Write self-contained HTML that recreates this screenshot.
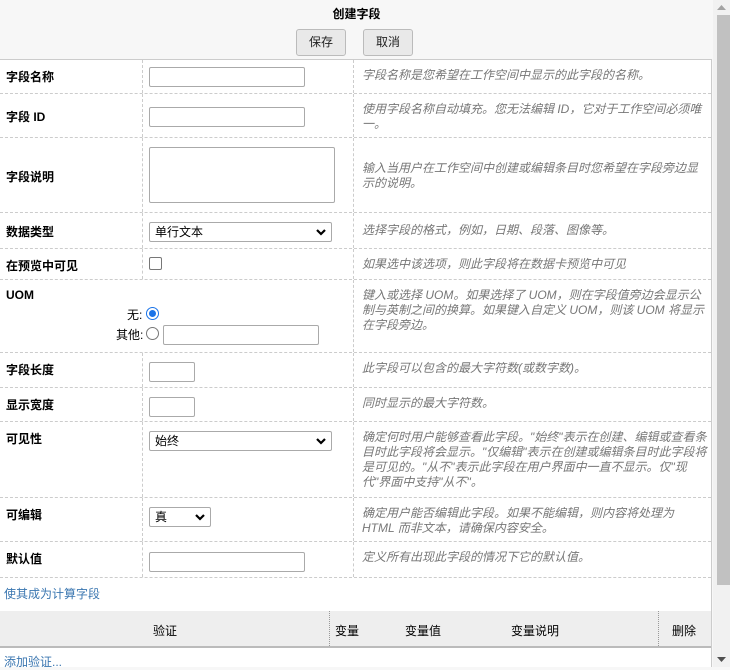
<!DOCTYPE html>
<html><head><meta charset="utf-8"><style>
*{box-sizing:border-box;margin:0;padding:0}
body{width:730px;height:667px;overflow:hidden;background:#f7f7f7;font-family:"Liberation Sans","Noto Sans CJK SC",sans-serif;font-size:12px;color:#000;position:relative}
.title{position:absolute;top:5px;left:0;width:713px;text-align:center;font-weight:bold;font-size:12px}
.btn{position:absolute;top:29px;height:27px;border:1px solid #bbb;border-radius:3px;background:#e9e9e9;font-size:12px;text-align:center;line-height:25px;color:#222}
.box{position:absolute;left:0;top:59px;width:712px;height:608px;background:#fff;border-top:1px solid #ccc;border-right:1px solid #ccc}
.row{position:absolute;left:0;width:711px;border-bottom:1px dashed #ccc}
.lab{position:absolute;left:6px;top:8px;font-weight:bold}
.c1{position:absolute;left:142px;top:0;bottom:0;border-left:1px dashed #ccc}
.c2{position:absolute;left:353px;top:0;bottom:0;border-left:1px dashed #ccc}
.help{position:absolute;left:362px;top:8px;width:345px;color:#777;font-style:italic;line-height:15px;font-size:12px}
.inp{position:absolute;left:149px;height:20px;border:1px solid #aaa;border-radius:2px;background:#fff}
.sel{position:absolute;left:149px;height:20px;border:1px solid #aaa;border-radius:2px;background:#fff;padding-left:5px;line-height:18px}
.sel svg{position:absolute;right:5px;top:6px}
.sb{position:absolute;left:713px;top:0;width:17px;height:667px;background:#f1f1f1}
.th{position:absolute;left:4px;top:15px;width:13px;height:570px;background:#c1c1c1}
a{color:#3a76b0;text-decoration:none}
</style></head><body>
<div class="title">创建字段</div>
<div class="btn" style="left:296px;width:50px">保存</div>
<div class="btn" style="left:363px;width:50px">取消</div>
<div class="box">
<div class="row" style="top:0;height:34px"><div class="lab">字段名称</div><div class="c1"></div><div class="c2"></div><div class="inp" style="top:7px;width:156px"></div><div class="help">字段名称是您希望在工作空间中显示的此字段的名称。</div></div>
<div class="row" style="top:34px;height:44px"><div class="lab" style="top:14px">字段 ID</div><div class="c1"></div><div class="c2"></div><div class="inp" style="top:13px;width:156px"></div><div class="help">使用字段名称自动填充。您无法编辑 ID，它对于工作空间必须唯一。</div></div>
<div class="row" style="top:78px;height:75px"><div class="lab" style="top:30px">字段说明</div><div class="c1"></div><div class="c2"></div><div class="inp" style="top:9px;width:186px;height:56px"></div><div class="help" style="top:23px">输入当用户在工作空间中创建或编辑条目时您希望在字段旁边显示的说明。</div></div>
<div class="row" style="top:153px;height:36px"><div class="lab" style="top:10px">数据类型</div><div class="c1"></div><div class="c2"></div><div class="sel" style="top:9px;width:183px">单行文本<svg width="10" height="7"><path d="M1 1L5 5L9 1" stroke="#000" stroke-width="2.2" fill="none"/></svg></div><div class="help" style="top:10px">选择字段的格式，例如，日期、段落、图像等。</div></div>
<div class="row" style="top:189px;height:31px"><div class="lab">在预览中可见</div><div class="c1"></div><div class="c2"></div><div style="position:absolute;left:149px;top:8px;width:13px;height:13px;border:1px solid #777;border-radius:2px"></div><div class="help">如果选中该选项，则此字段将在数据卡预览中可见</div></div>
<div class="row" style="top:220px;height:73px"><div class="lab" style="top:8px">UOM</div><div class="c2"></div>
<div style="position:absolute;left:127px;top:26px">无:</div><div style="position:absolute;left:146px;top:27px;width:13px;height:13px;border:1px solid #1a73e8;border-radius:50%;background:#fff"><div style="position:absolute;left:2px;top:2px;width:7px;height:7px;border-radius:50%;background:#1a73e8"></div></div>
<div style="position:absolute;left:116px;top:46px">其他:</div><div style="position:absolute;left:146px;top:47px;width:13px;height:13px;border:1px solid #777;border-radius:50%"></div><div class="inp" style="left:163px;top:45px;width:156px"></div>
<div class="help">键入或选择 UOM。如果选择了 UOM，则在字段值旁边会显示公制与英制之间的换算。如果键入自定义 UOM，则该 UOM 将显示在字段旁边。</div></div>
<div class="row" style="top:293px;height:35px"><div class="lab">字段长度</div><div class="c1"></div><div class="c2"></div><div class="inp" style="top:9px;width:46px"></div><div class="help">此字段可以包含的最大字符数(或数字数)。</div></div>
<div class="row" style="top:328px;height:34px"><div class="lab">显示宽度</div><div class="c1"></div><div class="c2"></div><div class="inp" style="top:9px;width:46px"></div><div class="help">同时显示的最大字符数。</div></div>
<div class="row" style="top:362px;height:76px"><div class="lab">可见性</div><div class="c1"></div><div class="c2"></div><div class="sel" style="top:9px;width:183px">始终<svg width="10" height="7"><path d="M1 1L5 5L9 1" stroke="#000" stroke-width="2.2" fill="none"/></svg></div><div class="help">确定何时用户能够查看此字段。"始终"表示在创建、编辑或查看条目时此字段将会显示。"仅编辑"表示在创建或编辑条目时此字段将是可见的。"从不"表示此字段在用户界面中一直不显示。仅"现代"界面中支持"从不"。</div></div>
<div class="row" style="top:438px;height:44px"><div class="lab">可编辑</div><div class="c1"></div><div class="c2"></div><div class="sel" style="top:9px;width:62px">真<svg width="10" height="7"><path d="M1 1L5 5L9 1" stroke="#000" stroke-width="2.2" fill="none"/></svg></div><div class="help">确定用户能否编辑此字段。如果不能编辑，则内容将处理为 HTML 而非文本，请确保内容安全。</div></div>
<div class="row" style="top:482px;height:36px"><div class="lab">默认值</div><div class="c1"></div><div class="c2"></div><div class="inp" style="top:10px;width:156px"></div><div class="help">定义所有出现此字段的情况下它的默认值。</div></div>
<div style="position:absolute;left:4px;top:525px"><a>使其成为计算字段</a></div>
<div style="position:absolute;left:0;top:551px;width:711px;height:37px;background:#eee;border-bottom:2px solid #bbb">
<div style="position:absolute;left:153px;top:11px">验证</div>
<div style="position:absolute;left:329px;top:0;bottom:0;border-left:1px dotted #999"></div>
<div style="position:absolute;left:335px;top:11px">变量</div>
<div style="position:absolute;left:405px;top:11px">变量值</div>
<div style="position:absolute;left:511px;top:11px">变量说明</div>
<div style="position:absolute;left:658px;top:0;bottom:0;border-left:1px dotted #999"></div>
<div style="position:absolute;left:672px;top:11px">删除</div>
</div>
<div style="position:absolute;left:4px;top:593px"><a>添加验证...</a></div>
</div>
<div class="sb"><div class="th"></div>
<svg style="position:absolute;left:4px;top:5px" width="9" height="5"><path d="M0 5L4.5 0L9 5Z" fill="#a3a3a3"/></svg>
<svg style="position:absolute;left:4px;top:657px" width="9" height="5"><path d="M0 0L4.5 5L9 0Z" fill="#505050"/></svg></div>
</body></html>
